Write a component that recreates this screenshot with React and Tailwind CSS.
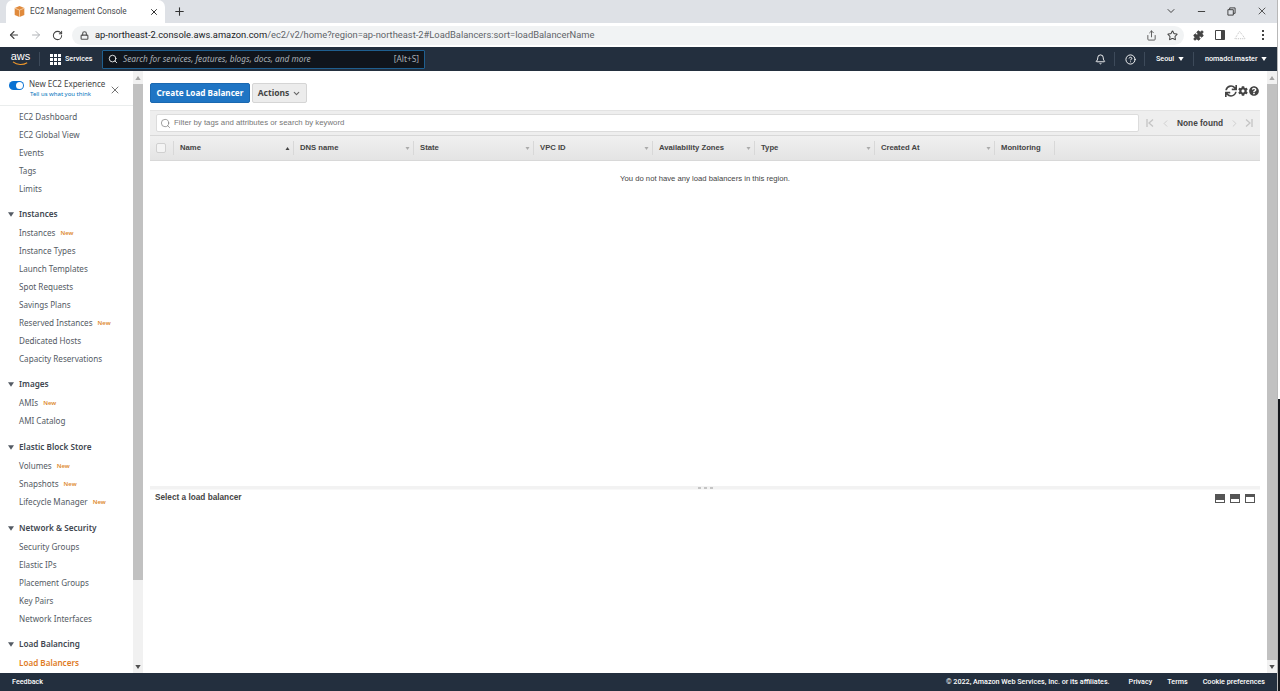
import React from 'react';
import { ArrowLeft, ArrowRight, RotateCw, Lock, Star, Puzzle, Search, X, Plus, ChevronDown, Minus, Share, Bell, CircleHelp, ChevronLeft, ChevronRight } from 'lucide-react';
import { FaSync, FaCog, FaQuestionCircle } from 'react-icons/fa';

const sans = 'font-["Noto_Sans",sans-serif]';
const roboto = 'font-["Roboto",sans-serif]';

const sections = [
    { gap: '', items: [['EC2 Dashboard'], ['EC2 Global View'], ['Events'], ['Tags'], ['Limits']] },
    { gap: 'mt-[7px]', title: 'Instances', items: [['Instances', true], ['Instance Types'], ['Launch Templates'], ['Spot Requests'], ['Savings Plans'], ['Reserved Instances', true], ['Dedicated Hosts'], ['Capacity Reservations']] },
    { gap: 'mt-[7px]', title: 'Images', items: [['AMIs', true], ['AMI Catalog']] },
    { gap: 'mt-[8px]', title: 'Elastic Block Store', items: [['Volumes', true], ['Snapshots', true], ['Lifecycle Manager', true]] },
    { gap: 'mt-[8px]', title: 'Network & Security', items: [['Security Groups'], ['Elastic IPs'], ['Placement Groups'], ['Key Pairs'], ['Network Interfaces']] },
    { gap: 'mt-[7px]', title: 'Load Balancing', items: [['Load Balancers']] },
];

const columns = [
    ['Name', 'w-[120px]', 'up'],
    ['DNS name', 'w-[120px]', 'down'],
    ['State', 'w-[120px]', 'down'],
    ['VPC ID', 'w-[119px]', 'down'],
    ['Availability Zones', 'w-[102px]', 'down'],
    ['Type', 'w-[120px]', 'down'],
    ['Created At', 'w-[120px]', 'down'],
    ['Monitoring', 'w-[60px]', null],
];

const Triangle = ({ className }) => (
    <svg viewBox="0 0 8 6" className={className}><path d="M0 0h8L4 6z" fill="currentColor" /></svg>
);

const Scrollbar = ({ thumbClass }) => (
    <div className="w-[10px] h-full bg-[#f1f1f1] flex flex-col shrink-0">
        <div className="h-[13px] flex items-center justify-center shrink-0">
            <Triangle className="w-[6px] h-[4px] rotate-180 text-[#a3a3a3]" />
        </div>
        <div className={`bg-[#c1c1c1] ${thumbClass}`} />
        <div className="flex-1" />
        <div className="h-[13px] flex items-center justify-center shrink-0">
            <Triangle className="w-[6px] h-[4px] text-[#505050]" />
        </div>
    </div>
);

const TabBar = () => (
    <div className="h-[23px] bg-[#dee1e6] flex items-end shrink-0">
        <div className="ml-[6px] w-[159px] h-[23px] bg-white rounded-t-[7px] flex items-center pl-[8px] pr-[6px]">
            <svg viewBox="0 0 16 16" className="w-[11px] h-[11px] mr-[5px]">
                <path d="M8 0L15 3v10l-7 3-7-3V3z" fill="#e08a3c" />
                <path d="M8 6v10M1 3l7 3 7-3" stroke="#fbe3c8" strokeWidth="1" fill="none" />
            </svg>
            <span className='text-[8.2px] text-[#45474a] flex-1 whitespace-nowrap font-["Roboto",sans-serif]'>EC2 Management Console</span>
            <X size={10} strokeWidth={2.4} className="text-[#333]" />
        </div>
        <Plus size={13} strokeWidth={2} className="text-[#333] ml-[8px] mb-[5px]" />
        <div className="flex-1" />
        <ChevronDown size={12} className="text-[#444] mb-[6px] mr-[19px]" />
        <Minus size={11} className="text-[#333] mb-[6px] mr-[20px]" />
        <svg viewBox="0 0 10 10" className="w-[9px] h-[9px] mb-[7px] mr-[20px] text-[#333]">
            <path d="M1 3h6v6H1zM3 3V1h6v6H7" fill="none" stroke="currentColor" strokeWidth="1" />
        </svg>
        <X size={12} strokeWidth={1.6} className="text-[#333] mb-[6px] mr-[9px]" />
    </div>
);

const AddressBar = () => (
    <div className="h-[24px] bg-white flex items-center shrink-0">
        <ArrowLeft size={12} strokeWidth={2.2} className="text-[#444] ml-[8px]" />
        <ArrowRight size={12} strokeWidth={2} className="text-[#b0b3b7] ml-[10px]" />
        <RotateCw size={11} strokeWidth={2.2} className="text-[#444] ml-[10px]" />
        <div className="ml-[9px] w-[1112px] h-[19px] bg-[#f1f3f4] rounded-full flex items-center pl-[8px] pr-[6px]">
            <Lock size={9} strokeWidth={3} className="text-[#555] mr-[6px]" />
            <span className='text-[9.36px] text-[#5f6368] whitespace-nowrap font-["Roboto",sans-serif] flex-1'>
                <span className="text-[#202124]">ap-northeast-2.console.aws.amazon.com</span>/ec2/v2/home?region=ap-northeast-2#LoadBalancers:sort=loadBalancerName
            </span>
            <Share size={11} className="text-[#555] mr-[10px]" />
            <Star size={11} strokeWidth={2.2} className="text-[#444]" />
        </div>
        <Puzzle size={11} fill="#444" className="text-[#444] ml-[9px]" />
        <svg viewBox="0 0 10 10" className="w-[10px] h-[10px] ml-[11px]">
            <path d="M.5.5h9v9h-9z" fill="none" stroke="#444" />
            <path d="M6 .5h3.5v9H6z" fill="#444" />
        </svg>
        <svg viewBox="0 0 14 10" className="w-[13px] h-[10px] ml-[9px]">
            <path d="M1 9l5-8 6 8z" fill="none" stroke="#bbb" strokeDasharray="1 1" />
        </svg>
        <div className="ml-[15px] flex flex-col gap-[2px]">
            <div className="w-[2px] h-[2px] bg-[#444]" />
            <div className="w-[2px] h-[2px] bg-[#444]" />
            <div className="w-[2px] h-[2px] bg-[#444]" />
        </div>
    </div>
);

const TopNav = () => (
    <div className={`h-[24px] bg-[#232f3e] flex items-center shrink-0 text-white ${sans}`}>
        <div className="ml-[11px] w-[19px] h-[16px] flex flex-col items-center relative">
            <span className='text-[11px] leading-[11px] font-["Liberation_Sans",sans-serif]'>aws</span>
            <svg viewBox="0 0 20 6" className="absolute top-[10px] left-0 w-[19px] h-[5px]">
                <path d="M1 1c5 4 12 4 17 1" fill="none" stroke="#f39a2b" strokeWidth="1.3" />
            </svg>
        </div>
        <div className="w-px h-[14px] bg-[#3d4a5a] ml-[9px]" />
        <div className="ml-[10px] grid grid-cols-3 gap-[1px] w-[11px]">
            {[...Array(9)].map((_, i) => <div key={i} className="w-[3px] h-[3px] bg-white" />)}
        </div>
        <span className={`ml-[4px] w-[27px] text-[7.2px] font-medium whitespace-nowrap ${roboto}`}>Services</span>
        <div className="ml-[10px] w-[323px] h-[19px] bg-[#10151c] border border-[#1f5f8f] rounded-[1px] flex items-center pl-[5px] pr-[5px]">
            <Search size={10} strokeWidth={2} className="text-white" />
            <span className="ml-[5px] text-[8.3px] italic text-[#aab0b7] flex-1 whitespace-nowrap">Search for services, features, blogs, docs, and more</span>
            <span className="text-[8.3px] text-[#aab0b7]">[Alt+S]</span>
        </div>
        <div className="flex-1" />
        <Bell size={11} strokeWidth={2} />
        <div className="w-px h-[14px] bg-[#3d4a5a] ml-[8px]" />
        <CircleHelp size={11} strokeWidth={2} className="ml-[10px]" />
        <div className="w-px h-[14px] bg-[#3d4a5a] ml-[8px]" />
        <span className={`ml-[11px] w-[19px] text-[7.2px] font-medium ${roboto}`}>Seoul</span>
        <Triangle className="w-[6px] h-[4px] ml-[3px] text-white" />
        <div className="w-px h-[14px] bg-[#3d4a5a] ml-[9px]" />
        <span className={`ml-[11px] w-[53px] text-[7.2px] font-medium whitespace-nowrap ${roboto}`}>nomadcl.master</span>
        <Triangle className="w-[6px] h-[4px] ml-[3px] mr-[10px] text-white" />
    </div>
);

const Sidebar = () => (
    <div className={`w-[143px] h-full flex shrink-0 ${sans}`}>
        <div className="w-[133px] h-full overflow-hidden bg-white">
            <div className="h-[35px] border-b border-[#eaeded] flex pl-[9px] pt-[7px]">
                <div className="w-[15px] h-[9px] rounded-full bg-[#0972d3] flex items-center justify-end pr-[1px] mt-[3px] shrink-0">
                    <div className="w-[7px] h-[7px] rounded-full bg-white" />
                </div>
                <div className="ml-[5px] flex flex-col">
                    <span className="text-[8px] leading-[12px] text-[#444] whitespace-nowrap">New EC2 Experience</span>
                    <span className="text-[6px] leading-[9px] text-[#0073bb] ml-[1px] whitespace-nowrap">Tell us what you think</span>
                </div>
                <X size={12} strokeWidth={1.5} className="ml-auto mr-[12px] mt-[6px] text-[#444]" />
            </div>
            <div className="pt-[2px]">
                {sections.map((section, i) => (
                    <div key={i} className={section.gap}>
                        {section.title && (
                            <div className="h-[19px] flex items-center pl-[8px]">
                                <Triangle className="w-[6px] h-[5px] text-[#545b64]" />
                                <span className="ml-[5px] text-[8.2px] font-semibold text-[#414750] whitespace-nowrap">{section.title}</span>
                            </div>
                        )}
                        {section.items.map(([label, isNew]) => (
                            <div key={label} className="h-[18px] flex items-center pl-[19px] whitespace-nowrap">
                                <span className={label === 'Load Balancers' ? 'text-[8.1px] font-semibold text-[#e07b1f]' : 'text-[8.1px] text-[#545b64]'}>{label}</span>
                                {isNew && <span className="ml-[5px] text-[6px] font-semibold text-[#dd8a2e]">New</span>}
                            </div>
                        ))}
                    </div>
                ))}
            </div>
        </div>
        <Scrollbar thumbClass="h-[496px]" />
    </div>
);

const Toolbar = () => (
    <div className={`h-[39px] flex items-start pl-[7px] pr-[8px] pt-[12px] shrink-0 ${sans}`}>
        <button className="w-[100px] h-[20px] rounded-[2px] bg-[#1f75c4] border border-[#1a68b0] text-white text-[8.2px] font-bold">Create Load Balancer</button>
        <button className="ml-[2px] w-[55px] h-[20px] rounded-[2px] bg-[#ececec] border border-[#d5d5d5] text-[#444] text-[8.5px] font-bold flex items-center justify-center">
            Actions
            <ChevronDown size={9} strokeWidth={3} className="ml-[3px] text-[#666]" />
        </button>
        <div className="ml-auto mt-[2px] flex items-center text-[#444]">
            <FaSync size={12} />
            <FaCog size={10} className="ml-[1px]" />
            <FaQuestionCircle size={10} className="ml-[1px]" />
        </div>
    </div>
);

const Table = () => (
    <div className='mx-[7px] font-["Liberation_Sans",sans-serif]'>
        <div className="h-[25px] bg-[#eeeeee] border-t border-[#e3e3e3] flex items-center pl-[6px]">
            <div className="w-[983px] h-[18px] bg-white rounded-[2px] border border-[#dcdcdc] flex items-center pl-[3px]">
                <Search size={11} strokeWidth={1.5} className="text-[#777]" />
                <span className="ml-[3px] text-[7.8px] text-[#777]">Filter by tags and attributes or search by keyword</span>
            </div>
            <svg viewBox="0 0 10 10" className="w-[10px] h-[10px] ml-[6px] text-[#c4c4c4]">
                <path d="M8 1.5L4 5l4 3.5M2 1v8" fill="none" stroke="currentColor" strokeWidth="1.3" />
            </svg>
            <ChevronLeft size={11} strokeWidth={1.6} className="text-[#c4c4c4] ml-[5px]" />
            <span className="ml-[6px] text-[8.3px] font-bold text-[#444] whitespace-nowrap">None found</span>
            <ChevronRight size={11} strokeWidth={1.6} className="text-[#c4c4c4] ml-[6px]" />
            <svg viewBox="0 0 10 10" className="w-[10px] h-[10px] ml-[4px] text-[#c4c4c4]">
                <path d="M2 1.5L6 5 2 8.5M8 1v8" fill="none" stroke="currentColor" strokeWidth="1.3" />
            </svg>
        </div>
        <div className="h-[26px] bg-gradient-to-b from-[#f0f0f0] to-[#e4e4e4] border-t border-b border-[#d8d8d8] flex items-center">
            <div className="w-[24px] h-[14px] flex items-center pl-[6px] border-r border-[#d8d8d8] shrink-0">
                <div className="w-[10px] h-[10px] rounded-[2px] bg-[#f4f4f4] border border-[#d0d0d0]" />
            </div>
            {columns.map(([label, width, sort]) => (
                <div key={label} className={`${width} h-[14px] flex items-center justify-between pl-[6px] pr-[3px] border-r border-[#d8d8d8] shrink-0`}>
                    <span className="text-[7.7px] font-bold text-[#444] whitespace-nowrap">{label}</span>
                    {sort === 'up' && <Triangle className="w-[5px] h-[3px] rotate-180 text-[#444]" />}
                    {sort === 'down' && <Triangle className="w-[5px] h-[3px] text-[#aaa]" />}
                </div>
            ))}
        </div>
        <div className="h-[325px] pt-[12px] text-center text-[7.7px] text-[#444]">You do not have any load balancers in this region.</div>
    </div>
);

const BottomPane = () => (
    <div className='flex-1 font-["Liberation_Sans",sans-serif]'>
        <div className="mx-[7px] h-[4px] bg-[#f2f2f2] border-b border-[#f8f8f8] flex items-center justify-center gap-[3px]">
            <div className="w-[3px] h-[2px] bg-[#c4c4c4]" />
            <div className="w-[3px] h-[2px] bg-[#c4c4c4]" />
            <div className="w-[3px] h-[2px] bg-[#c4c4c4]" />
        </div>
        <div className="flex items-center pl-[12px] pr-[12px] h-[15px] mt-[1px]">
            <span className="text-[8.24px] font-bold text-[#444] flex-1">Select a load balancer</span>
            <div className="flex gap-[5px]">
                <div className="w-[10px] h-[9px] bg-[#555] flex items-end p-[1px]"><div className="w-full h-[2px] bg-white" /></div>
                <div className="w-[10px] h-[9px] bg-[#555] flex items-end p-[1px]"><div className="w-full h-[3px] bg-white" /></div>
                <div className="w-[10px] h-[9px] bg-[#555] flex items-end p-[1px]"><div className="w-full h-[5px] bg-white" /></div>
            </div>
        </div>
    </div>
);

const Footer = () => (
    <div className={`h-[18px] bg-[#232f3e] flex items-center text-white text-[7.2px] font-medium shrink-0 whitespace-nowrap ${roboto}`}>
        <span className="ml-[12px]">Feedback</span>
        <div className="flex-1" />
        <span>© 2022, Amazon Web Services, Inc. or its affiliates.</span>
        <span className="ml-[19px]">Privacy</span>
        <span className="ml-[15px]">Terms</span>
        <span className="ml-[15px] mr-[12px]">Cookie preferences</span>
    </div>
);

const App = () => {
    return (
        <div className="w-[1280px] h-[691px] overflow-hidden flex bg-white">
            <div className="w-[1277px] h-full flex flex-col shrink-0">
                <TabBar />
                <AddressBar />
                <TopNav />
                <div className="flex-1 flex min-h-0">
                    <Sidebar />
                    <div className="flex-1 flex flex-col min-w-0">
                        <Toolbar />
                        <Table />
                        <BottomPane />
                    </div>
                    <Scrollbar thumbClass="h-[576px]" />
                </div>
                <Footer />
            </div>
            <div className="flex-1 flex flex-col border-l border-[#b8b8b8]">
                <div className="h-[399px] bg-white" />
                <div className="flex-1 bg-[#15181d]" />
            </div>
        </div>
    );
};

export default App;
